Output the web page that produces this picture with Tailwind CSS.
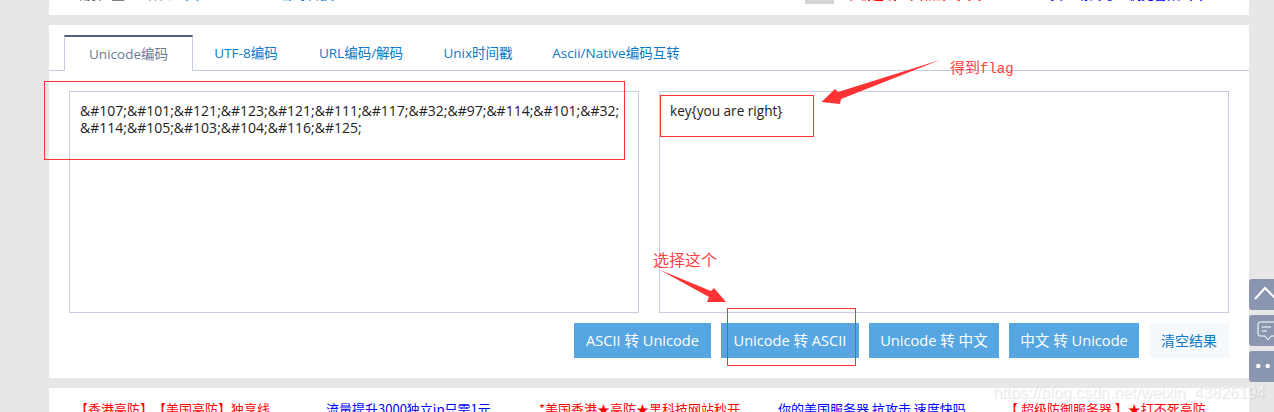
<!DOCTYPE html>
<html lang="en">
<head>
  <meta charset="UTF-8" />
  <title>Unicode编码转换</title>
  <script src="https://cdn.jsdelivr.net/npm/@tailwindcss/browser@4"></script>
</head>
<body class="relative h-[412px] overflow-hidden bg-[#e7e7e7] font-['Open_Sans','Noto_Sans_CJK_SC',sans-serif] text-[14px]">

  <div class="ml-[49px] w-[1200px]">
    <!-- breadcrumb bar, mostly scrolled away -->
    <div class="flex h-[15px] items-end justify-between overflow-hidden bg-white pb-[11px] pl-5 pr-[23px] text-[14px] leading-5">
      <div class="flex shrink-0 text-[#666]">
        <span class="w-[74px]">当前位置：</span>
        <a class="w-[81px] text-[#0b78c8]">站长工具</a>
        <a class="text-[#0b78c8]">Unicode编码转换</a>
      </div>
      <div class="flex shrink-0 items-start gap-[11px]">
        <span class="h-5 w-[29px] bg-[#d4d4d4]"></span>
        <span class="w-[175px] overflow-hidden whitespace-nowrap text-[13px] text-[#f00]">下载在线工具箱源码QQ:7807823</span>
        <span class="ml-[19px] w-[176px] overflow-hidden whitespace-nowrap text-[13px] text-[#00f]">买一场高考主机免备案 QQ:777777</span>
      </div>
    </div>

    <div class="mt-[10px] h-[353px] bg-white pt-[10px]">
      <!-- tabs -->
      <div class="flex h-[36px] border-b border-[#c5cede] pl-[15px] text-[13.5px]">
        <a class="-mb-px flex h-[36px] w-[129px] items-center justify-center border-x border-t-2 border-x-[#c5cede] border-t-[#56617f] bg-white pt-px text-[#6b7b95]">Unicode编码</a>
        <a class="flex w-[106px] items-center justify-center pt-[2px] text-[#0b78c8]">UTF-8编码</a>
        <a class="flex w-[124px] items-center justify-center pt-[2px] text-[#0b78c8]">URL编码/解码</a>
        <a class="flex w-[110px] items-center justify-center pt-[2px] text-[#0b78c8]">Unix时间戳</a>
        <a class="flex w-[166px] items-center justify-center pt-[2px] text-[#0b78c8]">Ascii/Native编码互转</a>
      </div>

      <!-- text areas -->
      <div class="mt-5 flex gap-5 pl-5">
        <div class="h-[222px] w-[570px] border border-[#c5cede] px-[10px] py-[10px] text-[14px] leading-[17px] text-[#222]">
          &amp;#107;&amp;#101;&amp;#121;&amp;#123;&amp;#121;&amp;#111;&amp;#117;&amp;#32;&amp;#97;&amp;#114;&amp;#101;&amp;#32;<br>&amp;#114;&amp;#105;&amp;#103;&amp;#104;&amp;#116;&amp;#125;
        </div>
        <div class="h-[222px] w-[570px] border border-[#c5cede] px-[10px] py-[10px] text-[13.6px] leading-[17px] text-[#222]">
          key{you are right}
        </div>
      </div>

      <!-- buttons -->
      <div class="mt-[10px] flex justify-end gap-[10px] pr-5 text-[14.6px] text-white">
        <button class="h-[35px] w-[137px] bg-[#56a6e2]">ASCII 转 Unicode</button>
        <button class="h-[35px] w-[138px] bg-[#56a6e2]">Unicode 转 ASCII</button>
        <button class="h-[35px] w-[130px] bg-[#56a6e2]">Unicode 转 中文</button>
        <button class="h-[35px] w-[130px] bg-[#56a6e2]">中文 转 Unicode</button>
        <button class="h-[35px] w-[80px] bg-[#f5f9fc] text-[14px] text-[#0b78c8]">清空结果</button>
      </div>
    </div>

    <!-- ad links -->
    <div class="mt-[10px] flex h-[30px] bg-white pt-[11px] font-['Noto_Sans_CJK_SC',sans-serif] text-[13px] leading-5 [text-spacing-trim:space-all]">
      <a class="ml-[26px] w-[251px] text-[#f00]">【香港高防】【美国高防】独享线</a>
      <a class="w-[213px] text-[#00f]">流量提升3000独立ip只需1元</a>
      <a class="w-[239px] text-[#f00]">*美国香港★高防★黑科技网站秒开</a>
      <a class="w-[227px] text-[#00f]">你的美国服务器 抗攻击 速度快吗</a>
      <a class="text-[#f00]">【 超级防御服务器 】★打不死高防</a>
    </div>
  </div>

  <!-- side float buttons -->
  <div class="absolute left-[1249px] top-[279px] flex w-[25px] flex-col gap-[5px]">
    <div class="h-[31px] rounded-l-[3px] bg-[#8a96b0]">
      <svg width="25" height="31" fill="none" stroke="#fff" stroke-width="2"><path d="M6 20 L16 9 L27 20"/></svg>
    </div>
    <div class="h-[31px] rounded-l-[3px] bg-[#8a96b0]">
      <svg width="25" height="31" fill="none" stroke="#fff" stroke-width="1"><path d="M27 7 H11 Q9 7 9 9 V19 Q9 21 11 21 H16 L19 25 L22 21 H27"/><path d="M13 12 H22 M13 16 H18"/></svg>
    </div>
    <div class="h-[31px] rounded-l-[3px] bg-[#8a96b0]">
      <svg width="25" height="31" fill="#fff"><circle cx="9.300" cy="15" r="2.200"/><circle cx="18.700" cy="15" r="2.200"/></svg>
    </div>
  </div>

  <!-- screenshot annotations -->
  <div class="absolute left-[44px] top-[81px] h-[79px] w-[581px] border border-[#f33]"></div>
  <div class="absolute left-[660px] top-[95px] h-[42px] w-[154px] border border-[#f33]"></div>
  <div class="absolute left-[727px] top-[308px] h-[58px] w-[129px] border border-[#f33]"></div>
  <span class="absolute left-[950px] top-[57px] font-['Noto_Sans_CJK_SC',sans-serif] text-[15px] leading-5 text-[#f44]">得到<span class="font-['Liberation_Mono',monospace] text-[14px]">flag</span></span>
  <span class="absolute left-[653px] top-[249px] font-['Noto_Sans_CJK_SC',sans-serif] text-[16px] leading-5 text-[#f44]">选择这个</span>
  <svg class="absolute left-0 top-0" width="1274" height="412" fill="#f33">
    <path d="M940 60 L838 92 L835 89 L821.500 102 L840 104 L841 99 Z"/>
    <path d="M660 270 L709 297 L707 302 L726 302 L714 288 L711 291 Z"/>
  </svg>

  <!-- csdn watermark -->
  <span class="absolute left-[993px] top-[383px] whitespace-nowrap font-['Liberation_Sans',sans-serif] text-[16px] leading-5 text-white/60 [text-shadow:1px_1px_1px_rgba(0,0,0,0.12)]">https://blog.csdn.net/weixin_43826194</span>

</body>
</html>
